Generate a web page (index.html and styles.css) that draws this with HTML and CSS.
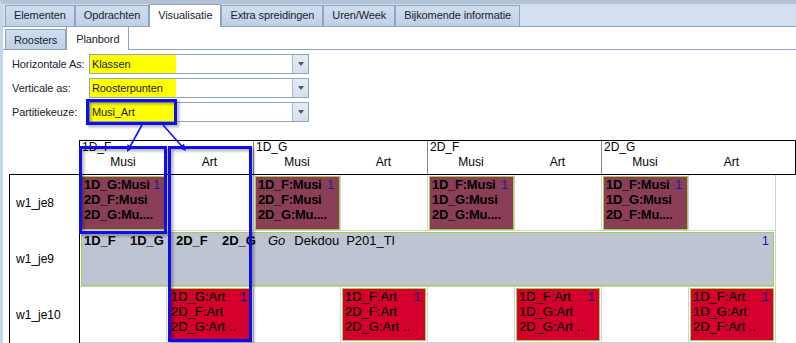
FILE: index.html
```html
<!DOCTYPE html>
<html>
<head>
<meta charset="utf-8">
<link rel="stylesheet" href="styles.css">
</head>
<body>
<div class="app">
  <div class="tabs">
    <div class="tab">Elementen</div>
    <div class="tab">Opdrachten</div>
    <div class="tab active">Visualisatie</div>
    <div class="tab">Extra spreidingen</div>
    <div class="tab">Uren/Week</div>
    <div class="tab">Bijkomende informatie</div>
  </div>
  <div class="subtabs">
    <div class="subtab">Roosters</div>
    <div class="subtab active">Planbord</div>
  </div>
  <div class="form">
    <div class="frow"><span class="flabel">Horizontale As:</span><div class="combo"><span class="val">Klassen</span><span class="btn"><i class="tri"></i></span></div></div>
    <div class="frow"><span class="flabel">Verticale as:</span><div class="combo"><span class="val">Roosterpunten</span><span class="btn"><i class="tri"></i></span></div></div>
    <div class="frow"><span class="flabel">Partitiekeuze:</span><div class="combo"><span class="val">Musi_Art</span><span class="btn"><i class="tri"></i></span></div></div>
  </div>
  <div class="head">
    <div class="grp"><div class="gname">1D_F</div><div class="subs"><span class="sc1">Musi</span><span class="sc2">Art</span></div></div>
    <div class="grp"><div class="gname">1D_G</div><div class="subs"><span class="sc1">Musi</span><span class="sc2">Art</span></div></div>
    <div class="grp"><div class="gname">2D_F</div><div class="subs"><span class="sc1">Musi</span><span class="sc2">Art</span></div></div>
    <div class="grp last"><div class="gname">2D_G</div><div class="subs"><span class="sc1">Musi</span><span class="sc2">Art</span></div></div>
  </div>
  <div class="body">
    <div class="lab">w1_je8</div>
    <div class="cell"><div class="blk mag"><div class="l1"><b>1D_G:Musi</b><span class="num">1</span></div><div><b>2D_F:Musi</b></div><div><b>2D_G:Mu....</b></div></div></div>
    <div class="cell"></div>
    <div class="cell"><div class="blk mag"><div class="l1"><b>1D_F:Musi</b><span class="num">1</span></div><div><b>2D_F:Musi</b></div><div><b>2D_G:Mu....</b></div></div></div>
    <div class="cell"></div>
    <div class="cell"><div class="blk mag"><div class="l1"><b>1D_F:Musi</b><span class="num">1</span></div><div><b>1D_G:Musi</b></div><div><b>2D_G:Mu....</b></div></div></div>
    <div class="cell"></div>
    <div class="cell"><div class="blk mag"><div class="l1"><b>1D_F:Musi</b><span class="num">1</span></div><div><b>1D_G:Musi</b></div><div><b>2D_F:Mu....</b></div></div></div>
    <div class="cell"></div>

    <div class="lab">w1_je9</div>
    <div class="cell span"><div class="blk gray"><div class="l1"><span class="items"><b class="k">1D_F</b><b class="k">1D_G</b><b class="k">2D_F</b><b class="k">2D_G</b><i class="go">Go</i><span class="dek">Dekdou</span><span>P201_Tl</span></span><span class="num">1</span></div></div></div>

    <div class="lab">w1_je10</div>
    <div class="cell"></div>
    <div class="cell"><div class="blk red"><div class="l1"><span>1D_G:Art</span><span class="num">1</span></div><div>2D_F:Art</div><div>2D_G:Art ..</div></div></div>
    <div class="cell"></div>
    <div class="cell"><div class="blk red"><div class="l1"><span>1D_F:Art</span><span class="num">1</span></div><div>2D_F:Art</div><div>2D_G:Art ..</div></div></div>
    <div class="cell"></div>
    <div class="cell"><div class="blk red"><div class="l1"><span>1D_F:Art</span><span class="num">1</span></div><div>1D_G:Art</div><div>2D_G:Art ..</div></div></div>
    <div class="cell"></div>
    <div class="cell"><div class="blk red"><div class="l1"><span>1D_F:Art</span><span class="num">1</span></div><div>1D_G:Art</div><div>2D_F:Art ..</div></div></div>
  </div>
</div>
<svg class="annot" width="796" height="343" viewBox="0 0 796 343">
  <defs>
    <filter id="sh" x="-10%" y="-10%" width="130%" height="130%">
      <feDropShadow dx="2" dy="2" stdDeviation="1.5" flood-color="#000" flood-opacity="0.35"/>
    </filter>
  </defs>
  <g fill="none" stroke="#1010ee" stroke-width="3" filter="url(#sh)">
    <rect x="87.5" y="100.5" width="88" height="23"/>
    <rect x="80.5" y="147.5" width="85" height="85"/>
    <rect x="169.5" y="147.5" width="81" height="193"/>
  </g>
  <g stroke="#1010ee" stroke-width="1.6" fill="#1010ee">
    <line x1="142" y1="125" x2="129.5" y2="147.5"/>
    <polygon points="127,152 133.5,147.6 127.3,144.2" stroke="none"/>
    <line x1="163" y1="125" x2="183" y2="147.5"/>
    <polygon points="186,151 184,143.4 178.8,148.1" stroke="none"/>
  </g>
</svg>
</body>
</html>
```
FILE: styles.css
```css
html, body {
  margin: 0;
  padding: 0;
}
body {
  position: relative;
  width: 796px;
  height: 343px;
  overflow: hidden;
  background: #fff;
  font-family: "Liberation Sans", Arial, sans-serif;
  color: #000;
}
.app {
  height: 343px;
  box-sizing: border-box;
  border-top: 4px solid #b3c2d6;
  border-left: 3px solid #c6d5e9;
}

/* main tabs */
.tabs {
  display: flex;
  align-items: flex-end;
  height: 22px;
  padding-left: 2px;
  background: #d3dfef;
  border-bottom: 1px solid #8ea3c2;
}
.tab {
  position: relative;
  box-sizing: border-box;
  height: 21px;
  padding: 0 8px;
  border: 1px solid #8ea3c2;
  border-bottom: none;
  background: linear-gradient(#d0ddef, #bfd0e7);
  font-size: 11px;
  letter-spacing: -0.1px;
  line-height: 19px;
  color: #1a2230;
  white-space: nowrap;
}
.tab.active {
  height: 23px;
  margin-bottom: -1px;
  background: #fff;
  line-height: 20px;
  z-index: 1;
}

/* sub tabs */
.subtabs {
  display: flex;
  align-items: flex-end;
  height: 22px;
  padding-left: 2px;
  border-bottom: 1px solid #8ea3c2;
}
.subtab {
  position: relative;
  box-sizing: border-box;
  height: 20px;
  padding: 0 8px;
  border: 1px solid #8ea3c2;
  border-bottom: none;
  background: linear-gradient(#d0ddef, #bfd0e7);
  font-size: 11px;
  letter-spacing: -0.1px;
  line-height: 20px;
  color: #1a2230;
}
.subtab.active {
  height: 23px;
  margin-bottom: -1px;
  border-top: none;
  background: #fff;
  line-height: 24px;
  padding: 0 9px;
  z-index: 1;
}

/* form */
.form {
  display: flex;
  flex-direction: column;
  gap: 4px;
  padding: 4px 0 0 9px;
}
.frow {
  display: flex;
  align-items: center;
  height: 20px;
}
.flabel {
  width: 77px;
  font-size: 11px;
  letter-spacing: -0.1px;
  color: #1a2230;
  white-space: nowrap;
}
.combo {
  display: flex;
  box-sizing: border-box;
  width: 220px;
  height: 20px;
  border: 1px solid #8fa4c3;
  background: #fff;
}
.val {
  box-sizing: border-box;
  width: 86px;
  padding-left: 2px;
  background: #ffff00;
  font-size: 11px;
  letter-spacing: -0.1px;
  line-height: 18px;
  color: #1a1a1a;
  white-space: nowrap;
}
.btn {
  margin-left: auto;
  box-sizing: border-box;
  width: 16px;
  border-left: 1px solid #a8b8cf;
  background: linear-gradient(#e6ecf4, #d6dfeb);
  display: flex;
  align-items: center;
  justify-content: center;
}
.tri {
  width: 0;
  height: 0;
  border-left: 3.5px solid transparent;
  border-right: 3.5px solid transparent;
  border-top: 4px solid #4a586c;
}

/* board header */
.head {
  display: flex;
  box-sizing: border-box;
  width: 717px;
  height: 35px;
  margin: 18px 0 0 76px;
  border: 1px solid #000;
  font-size: 12px;
}
.grp {
  box-sizing: border-box;
  width: 174px;
  border-right: 1px solid #8a8a8a;
}
.grp.last {
  flex: 1;
  border-right: none;
}
.gname {
  height: 13px;
  line-height: 13px;
  padding-left: 2px;
}
.subs {
  display: flex;
  margin-top: 2px;
  line-height: 13px;
}
.sc1 {
  width: 86px;
  text-align: center;
}
.sc2 {
  width: 87px;
  text-align: center;
}

/* board body */
.body {
  display: grid;
  grid-template-columns: 71px repeat(8, 87px);
  grid-auto-rows: 56px;
  width: 767px;
  margin: -1px 0 0 6px;
  border-top: 1px solid #000;
}
.lab {
  box-sizing: border-box;
  border-left: 1px solid #000;
  border-right: 1px solid #000;
  padding-left: 6px;
  display: flex;
  align-items: center;
  font-size: 12px;
}
.cell {
  box-sizing: border-box;
  border-right: 1px solid #d2d2d2;
  border-bottom: 1px solid #d2d2d2;
  padding: 1px 0 0 1px;
  display: flex;
  flex-direction: column;
}
.cell.span {
  grid-column: span 8;
  padding-right: 1px;
}
.blk {
  flex: 1;
  box-sizing: border-box;
  border: 1px solid #a2cf46;
  padding: 0 4px 0 2px;
  font-size: 13px;
  line-height: 15px;
  white-space: nowrap;
  overflow: hidden;
}
.blk.mag {
  background: #8b3f57;
  letter-spacing: -0.25px;
  padding-right: 5px;
}
.blk.red {
  background: #d5002b;
  margin: 0 1px 1px 0;
  -webkit-text-stroke: 0.2px #000;
}
.blk.gray {
  background: #bec5d2;
}
.l1 {
  display: flex;
  justify-content: space-between;
}
.num {
  color: #1a1aa8;
}
.items {
  display: flex;
}
.k {
  display: inline-block;
  width: 46px;
}
.go {
  margin-right: 9px;
}
.dek {
  margin-right: 7px;
}

/* annotation overlay */
.annot {
  position: absolute;
  top: 0;
  left: 0;
  pointer-events: none;
}
```
